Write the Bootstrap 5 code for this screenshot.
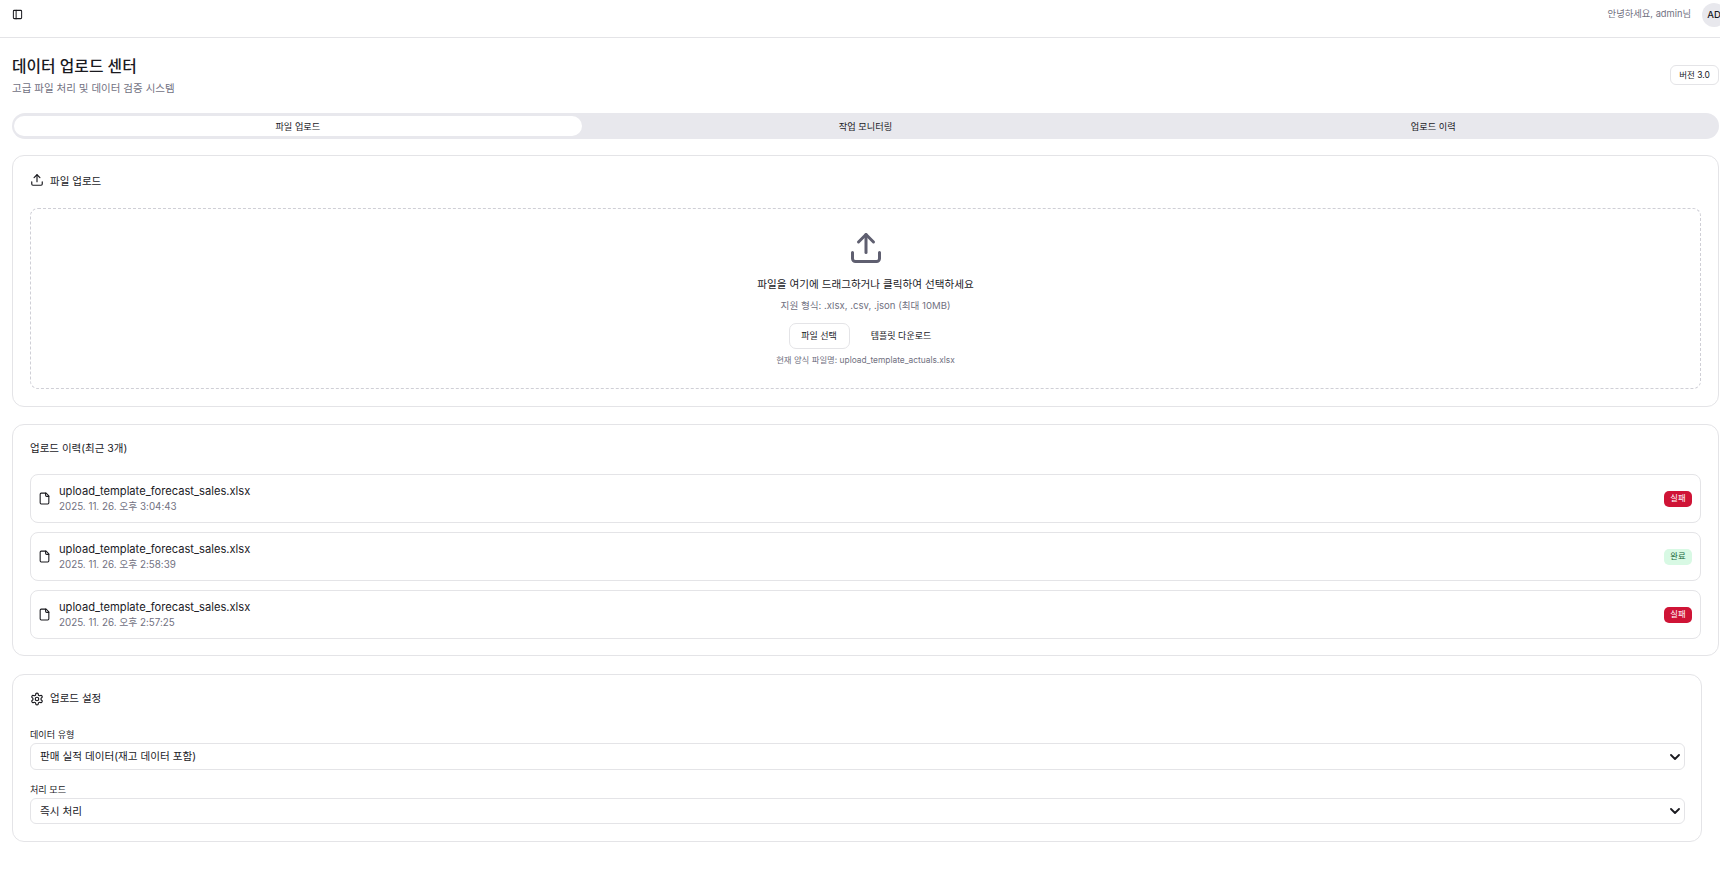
<!DOCTYPE html>
<html lang="ko">
<head>
  <meta charset="UTF-8">
  <meta name="viewport" content="width=device-width, initial-scale=1.0">
  <title>데이터 업로드 센터</title>
  <link href="https://cdn.jsdelivr.net/npm/bootstrap@5.3.0/dist/css/bootstrap.min.css" rel="stylesheet">
  <style>
    html, body { overflow-x: hidden; }
    body {
      background-color: #fff;
      color: #1a1a1f;
      font-family: Inter, "Noto Sans CJK KR", sans-serif;
      font-size: 12px;
      width: 1720px;
    }
    .top-bar {
      height: 38px;
      border-bottom: 1px solid #e4e4e7;
      padding: 3px 0 0 11.5px;
      width: 1726px;
    }
    .top-bar > svg { width: 11px; height: 11px; margin-top: 6px; }
    .hello { color: #71717f; font-size: 9.3px; margin-right: 11px; margin-top: -2px; }
    .avatar {
      width: 24px; height: 24px;
      border-radius: 50%;
      background: #e8e8ed;
      font-size: 9.5px; font-weight: 500;
    }
    .page-wrap { padding: 17px 1px 0 12px; }
    .page-title { font-size: 15.8px; font-weight: 500; line-height: 24px; margin: 0 0 1px; }
    .page-sub { color: #71717f; font-size: 10.5px; line-height: 18px; margin: 0; }
    .ver-tag {
      border: 1px solid #e4e4e7; border-radius: 6px;
      font-size: 8.5px; height: 20px; width: 49px;
      margin-top: -3px;
    }
    .tab-strip {
      background: #e8e8ed; border-radius: 13px; padding: 3px 2px;
      height: 26px; margin-top: 15px;
    }
    .tab-strip div { flex: 1 1 0; border-radius: 10px; font-size: 9.2px; padding-top: 1px; }
    .tab-strip .on { background: #fff; }
    .box {
      border: 1px solid #e4e4e7; border-radius: 12px;
      padding: 0 17px;
    }
    .box-title { font-size: 10.5px; gap: 6px; }
    .box-title svg { width: 14px; height: 14px; }
    .box-title svg.raised { margin-top: -4px; }
    .upload-box { height: 252px; margin-top: 16px; }
    .upload-box .box-title { height: 52px; }
    .history-box { margin-top: 17px; height: 232px; }
    .history-title { height: 49px; padding-bottom: 2px; }
    .history-list { gap: 9px; }
    .settings-box { margin-top: 18px; height: 168px; width: 1690px; }
    .settings-title { height: 48px; margin-bottom: 5px; }
    .drop-zone {
      border: 1px dashed #cfcfd6; border-radius: 8px;
      height: 181px; padding-top: 21px;
    }
    .drop-zone svg { width: 36px; height: 36px; display: block; }
    .drop-main { font-size: 10.6px; margin: 10px 0 0; line-height: 18px; }
    .drop-hint { color: #71717f; font-size: 9.6px; margin: 4px 0 0; line-height: 16px; }
    .drop-btns { gap: 10px; margin-top: 9px; }
    .btn-pick, .btn-tpl {
      font-size: 9px; height: 26px; padding: 0;
      border-radius: 7px; color: #1a1a1f;
    }
    .btn-pick { width: 61px; border: 1px solid #e4e4e7; }
    .btn-tpl { width: 83px; border: 0; }
    .drop-file { color: #71717f; font-size: 8.4px; margin: 4px 0 0; line-height: 14px; }
    .file-row {
      border: 1px solid #e4e4e7; border-radius: 8px;
      height: 49px; padding: 0 8px 0 7px;
    }
    .file-row svg { width: 13px; height: 13px; margin-right: 8px; }
    .file-name { font-size: 11.15px; line-height: 16px; }
    .file-date { color: #71717f; font-size: 9.8px; line-height: 15px; }
    .state {
      width: 28px; height: 16px; border-radius: 5px;
      font-size: 8.3px;
    }
    .state-fail { background: #cf1436; color: #fff; }
    .state-ok { background: #d8f9e4; color: #16653a; }
    .field-label { font-size: 9.1px; line-height: 14px; margin: 0 0 1px; display: block; }
    .form-select.field-select {
      font-size: 10.6px; color: #1a1a1f;
      border: 1px solid #e4e4e7; border-radius: 6px;
      padding: 0 24px 0 9px; height: 27px; line-height: 25px;
      background-image: url("data:image/svg+xml,%3csvg xmlns='http://www.w3.org/2000/svg' viewBox='0 0 10 6'%3e%3cpath fill='none' stroke='%231a1a1f' stroke-width='1.8' stroke-linecap='round' stroke-linejoin='round' d='M1 1l4 4 4-4'/%3e%3c/svg%3e");
      background-position: right 4px center;
      background-size: 10px 6px;
      width: 1655px;
    }
    .select-gap { margin-bottom: 13px; }
    .form-select.select-short { height: 26px; }
  </style>
</head>
<body>
  <!-- Header -->
  <div class="top-bar d-flex align-items-start justify-content-between">
    <svg viewBox="0 0 24 24" fill="none" stroke="#1a1a1f" stroke-width="2.2" stroke-linecap="round" stroke-linejoin="round"><rect x="3" y="3" width="18" height="18" rx="2"/><path d="M9 3v18"/></svg>
    <div class="d-flex align-items-center">
      <span class="hello">안녕하세요, admin님</span>
      <div class="avatar d-flex align-items-center justify-content-center">AD</div>
    </div>
  </div>

  <div class="page-wrap">
    <!-- Title -->
    <div class="d-flex justify-content-between align-items-center">
      <div>
        <h1 class="page-title">데이터 업로드 센터</h1>
        <p class="page-sub">고급 파일 처리 및 데이터 검증 시스템</p>
      </div>
      <div class="ver-tag d-flex align-items-center justify-content-center">버전 3.0</div>
    </div>

    <!-- Tabs -->
    <div class="tab-strip d-flex">
      <div class="on d-flex align-items-center justify-content-center">파일 업로드</div>
      <div class="d-flex align-items-center justify-content-center">작업 모니터링</div>
      <div class="d-flex align-items-center justify-content-center">업로드 이력</div>
    </div>

    <!-- Upload -->
    <div class="box upload-box">
      <div class="box-title d-flex align-items-center">
        <svg class="raised" viewBox="0 0 24 24" fill="none" stroke="#1a1a1f" stroke-width="2" stroke-linecap="round" stroke-linejoin="round"><path d="M21 15v4a2 2 0 0 1-2 2H5a2 2 0 0 1-2-2v-4"/><path d="M17 8l-5-5-5 5"/><path d="M12 3v12"/></svg>
        <span>파일 업로드</span>
      </div>
      <div class="drop-zone d-flex flex-column align-items-center">
        <svg viewBox="0 0 24 24" fill="none" stroke="#5f5f70" stroke-width="2" stroke-linecap="round" stroke-linejoin="round"><path d="M21 15v4a2 2 0 0 1-2 2H5a2 2 0 0 1-2-2v-4"/><path d="M17 8l-5-5-5 5"/><path d="M12 3v12"/></svg>
        <p class="drop-main">파일을 여기에 드래그하거나 클릭하여 선택하세요</p>
        <p class="drop-hint">지원 형식: .xlsx, .csv, .json (최대 10MB)</p>
        <div class="d-flex drop-btns">
          <button type="button" class="btn btn-pick">파일 선택</button>
          <button type="button" class="btn btn-tpl">템플릿 다운로드</button>
        </div>
        <p class="drop-file">현재 양식 파일명: upload_template_actuals.xlsx</p>
      </div>
    </div>

    <!-- History -->
    <div class="box history-box">
      <div class="box-title history-title d-flex align-items-center">업로드 이력(최근 3개)</div>
      <div class="d-flex flex-column history-list">
        <div class="file-row d-flex align-items-center">
          <svg viewBox="0 0 24 24" fill="none" stroke="#1a1a1f" stroke-width="2" stroke-linecap="round" stroke-linejoin="round"><path d="M15 2H6a2 2 0 0 0-2 2v16a2 2 0 0 0 2 2h12a2 2 0 0 0 2-2V7z"/><path d="M14 2v4a2 2 0 0 0 2 2h4"/></svg>
          <div class="flex-grow-1">
            <div class="file-name">upload_template_forecast_sales.xlsx</div>
            <div class="file-date">2025. 11. 26. 오후 3:04:43</div>
          </div>
          <div class="state state-fail d-flex align-items-center justify-content-center">실패</div>
        </div>
        <div class="file-row d-flex align-items-center">
          <svg viewBox="0 0 24 24" fill="none" stroke="#1a1a1f" stroke-width="2" stroke-linecap="round" stroke-linejoin="round"><path d="M15 2H6a2 2 0 0 0-2 2v16a2 2 0 0 0 2 2h12a2 2 0 0 0 2-2V7z"/><path d="M14 2v4a2 2 0 0 0 2 2h4"/></svg>
          <div class="flex-grow-1">
            <div class="file-name">upload_template_forecast_sales.xlsx</div>
            <div class="file-date">2025. 11. 26. 오후 2:58:39</div>
          </div>
          <div class="state state-ok d-flex align-items-center justify-content-center">완료</div>
        </div>
        <div class="file-row d-flex align-items-center">
          <svg viewBox="0 0 24 24" fill="none" stroke="#1a1a1f" stroke-width="2" stroke-linecap="round" stroke-linejoin="round"><path d="M15 2H6a2 2 0 0 0-2 2v16a2 2 0 0 0 2 2h12a2 2 0 0 0 2-2V7z"/><path d="M14 2v4a2 2 0 0 0 2 2h4"/></svg>
          <div class="flex-grow-1">
            <div class="file-name">upload_template_forecast_sales.xlsx</div>
            <div class="file-date">2025. 11. 26. 오후 2:57:25</div>
          </div>
          <div class="state state-fail d-flex align-items-center justify-content-center">실패</div>
        </div>
      </div>
    </div>

    <!-- Settings -->
    <div class="box settings-box">
      <div class="box-title settings-title d-flex align-items-center">
        <svg viewBox="0 0 24 24" fill="none" stroke="#1a1a1f" stroke-width="2" stroke-linecap="round" stroke-linejoin="round"><path d="M12.22 2h-.44a2 2 0 0 0-2 2v.18a2 2 0 0 1-1 1.73l-.43.25a2 2 0 0 1-2 0l-.15-.08a2 2 0 0 0-2.73.73l-.22.38a2 2 0 0 0 .73 2.73l.15.1a2 2 0 0 1 1 1.72v.51a2 2 0 0 1-1 1.74l-.15.09a2 2 0 0 0-.73 2.73l.22.38a2 2 0 0 0 2.73.73l.15-.08a2 2 0 0 1 2 0l.43.25a2 2 0 0 1 1 1.73V20a2 2 0 0 0 2 2h.44a2 2 0 0 0 2-2v-.18a2 2 0 0 1 1-1.73l.43-.25a2 2 0 0 1 2 0l.15.08a2 2 0 0 0 2.73-.73l.22-.39a2 2 0 0 0-.73-2.73l-.15-.08a2 2 0 0 1-1-1.74v-.5a2 2 0 0 1 1-1.74l.15-.09a2 2 0 0 0 .73-2.73l-.22-.38a2 2 0 0 0-2.73-.73l-.15.08a2 2 0 0 1-2 0l-.43-.25a2 2 0 0 1-1-1.73V4a2 2 0 0 0-2-2z"/><circle cx="12" cy="12" r="3"/></svg>
        <span>업로드 설정</span>
      </div>
      <label class="field-label">데이터 유형</label>
      <select class="form-select field-select select-gap"><option>판매 실적 데이터(재고 데이터 포함)</option></select>
      <label class="field-label">처리 모드</label>
      <select class="form-select field-select select-short"><option>즉시 처리</option></select>
    </div>
  </div>

  <script src="https://cdn.jsdelivr.net/npm/bootstrap@5.3.0/dist/js/bootstrap.bundle.min.js"></script>
</body>
</html>
